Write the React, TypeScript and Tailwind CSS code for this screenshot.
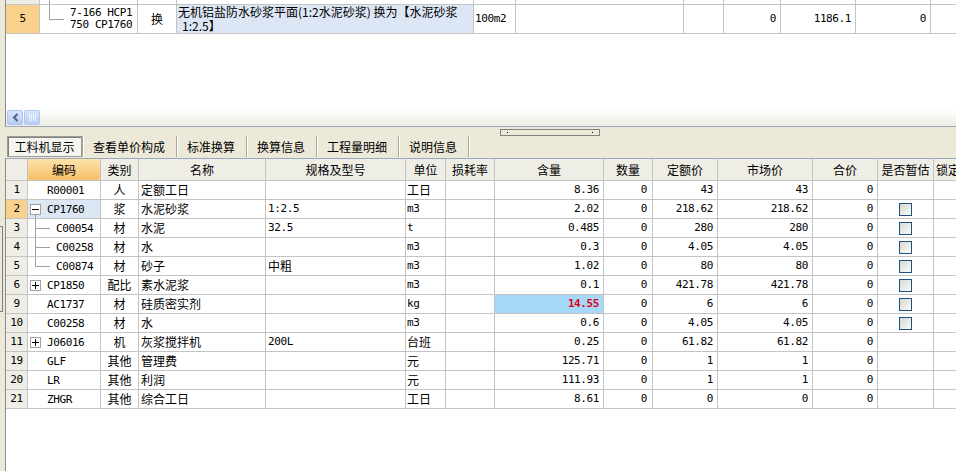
import React from 'react';

const cjk = "font-['Noto_Sans_CJK_SC',sans-serif] text-[12px]";
const mono = "font-['DejaVu_Sans_Mono','Noto_Sans_CJK_SC',monospace] text-[11px] tracking-[-0.4px]";
const isCjk = (s: string) => /[\u4e00-\u9fff]/.test(s);
const fontFor = (s: string) => (isCjk(s) ? cjk : mono);

type Row = {
  n: string;
  code: string;
  tree?: 'minus' | 'plus';
  child?: 'mid' | 'last';
  cat: string;
  name: string;
  spec?: string;
  unit: string;
  qty: string;
  price: string;
  cb?: boolean;
  sel?: boolean;
  hl?: boolean;
};

const rows: Row[] = [
  { n: '1', code: 'R00001', cat: '人', name: '定额工日', unit: '工日', qty: '8.36', price: '43' },
  { n: '2', code: 'CP1760', tree: 'minus', cat: '浆', name: '水泥砂浆', spec: '1:2.5', unit: 'm3', qty: '2.02', price: '218.62', cb: true, sel: true },
  { n: '3', code: 'C00054', child: 'mid', cat: '材', name: '水泥', spec: '32.5', unit: 't', qty: '0.485', price: '280', cb: true },
  { n: '4', code: 'C00258', child: 'mid', cat: '材', name: '水', unit: 'm3', qty: '0.3', price: '4.05', cb: true },
  { n: '5', code: 'C00874', child: 'last', cat: '材', name: '砂子', spec: '中粗', unit: 'm3', qty: '1.02', price: '80', cb: true },
  { n: '6', code: 'CP1850', tree: 'plus', cat: '配比', name: '素水泥浆', unit: 'm3', qty: '0.1', price: '421.78', cb: true },
  { n: '9', code: 'AC1737', cat: '材', name: '硅质密实剂', unit: 'kg', qty: '14.55', price: '6', cb: true, hl: true },
  { n: '10', code: 'C00258', cat: '材', name: '水', unit: 'm3', qty: '0.6', price: '4.05', cb: true },
  { n: '11', code: 'J06016', tree: 'plus', cat: '机', name: '灰浆搅拌机', spec: '200L', unit: '台班', qty: '0.25', price: '61.82' },
  { n: '19', code: 'GLF', cat: '其他', name: '管理费', unit: '元', qty: '125.71', price: '1' },
  { n: '20', code: 'LR', cat: '其他', name: '利润', unit: '元', qty: '111.93', price: '1' },
  { n: '21', code: 'ZHGR', cat: '其他', name: '综合工日', unit: '工日', qty: '8.61', price: '0' },
];

const headers: [string, string][] = [
  ['', 'w-[22px] justify-center'],
  ['编码', 'w-[73px] justify-center'],
  ['类别', 'w-[38px] justify-center'],
  ['名称', 'w-[127px] justify-center'],
  ['规格及型号', 'w-[140px] justify-center'],
  ['单位', 'w-[40px] justify-center'],
  ['损耗率', 'w-[49px] justify-center'],
  ['含量', 'w-[109px] justify-center'],
  ['数量', 'w-[49px] justify-center'],
  ['定额价', 'w-[65px] justify-center'],
  ['市场价', 'w-[95px] justify-center'],
  ['合价', 'w-[65px] justify-center'],
  ['是否暂估', 'w-[56px] justify-center'],
  ['锁定', 'w-[60px] pl-[2px]'],
];

const cell = 'h-full shrink-0 border-r border-[#c4c4c4] flex items-center overflow-hidden whitespace-nowrap';

function Checkbox() {
  return <div className="w-[13px] h-[13px] border border-[#1c5180] bg-gradient-to-br from-[#d8d8d0] to-[#fbfbf9]" />;
}

function TreeBox({ sign }: { sign: string }) {
  return (
    <div className="absolute left-[2px] top-[4px] w-[11px] h-[11px] border border-[#a0a0a0] bg-white flex items-center justify-center">
      <div className="relative w-[7px] h-[7px]">
        <div className="absolute left-0 top-[3px] w-[7px] h-px bg-black" />
        {sign === '+' && <div className="absolute left-[3px] top-0 w-px h-[7px] bg-black" />}
      </div>
    </div>
  );
}

function CodeCell({ r }: { r: Row }) {
  return (
    <div className={`${cell} w-[73px] relative ${r.sel ? 'bg-[#dde7f4]' : ''}`}>
      {r.tree === 'minus' && (
        <>
          <TreeBox sign="-" />
          <div className="absolute left-[7px] top-[15px] bottom-0 w-px bg-[#a0a0a0]" />
        </>
      )}
      {r.tree === 'plus' && <TreeBox sign="+" />}
      {r.child && (
        <>
          <div className={`absolute left-[7px] top-0 w-px bg-[#a0a0a0] ${r.child === 'mid' ? 'bottom-0' : 'h-[9px]'}`} />
          <div className="absolute left-[7px] top-[9px] w-[15px] h-px bg-[#a0a0a0]" />
        </>
      )}
      <span className={`${mono} ${r.child ? 'pl-[28px]' : 'pl-[19px]'} pt-[2px]`}>{r.code}</span>
    </div>
  );
}

function GridRow({ r }: { r: Row }) {
  return (
    <div className="flex h-[19px] border-b border-[#c4c4c4] bg-white">
      <div className={`${cell} w-[22px] justify-center ${mono} ${r.sel ? 'bg-[#f9d18d]' : 'bg-[#eeede6]'}`}>{r.n}</div>
      <CodeCell r={r} />
      <div className={`${cell} w-[38px] justify-center ${cjk}`}>{r.cat}</div>
      <div className={`${cell} w-[127px] pl-[2px] ${cjk}`}>{r.name}</div>
      <div className={`${cell} w-[140px] pl-[2px] ${fontFor(r.spec ?? '')}`}>{r.spec}</div>
      <div className={`${cell} w-[40px] pl-[1px] ${fontFor(r.unit)}`}>{r.unit}</div>
      <div className={`${cell} w-[49px]`} />
      <div
        className={`${cell} w-[109px] justify-end pr-[4px] ${mono} ${
          r.hl ? 'bg-[#a6d8f8] text-[#e00010] font-bold' : ''
        }`}
      >
        {r.qty}
      </div>
      <div className={`${cell} w-[49px] justify-end pr-[5px] ${mono}`}>0</div>
      <div className={`${cell} w-[65px] justify-end pr-[4px] ${mono}`}>{r.price}</div>
      <div className={`${cell} w-[95px] justify-end pr-[4px] ${mono}`}>{r.price}</div>
      <div className={`${cell} w-[65px] justify-end pr-[4px] ${mono}`}>0</div>
      <div className={`${cell} w-[56px] justify-center`}>{r.cb && <Checkbox />}</div>
      <div className={`${cell} w-[60px]`} />
    </div>
  );
}

function TopPanel() {
  const tc = 'h-full shrink-0 border-r border-[#c4c4c4]';
  return (
    <div className="ml-[5px] h-[127px] bg-white border-l border-b border-l-[#8a8a8a] border-b-[#99a8bd] flex flex-col overflow-hidden">
      {/* tail of the previous row */}
      <div className="flex h-[5px] shrink-0 border-b border-[#c4c4c4]">
        <div className={`${tc} w-[34px] bg-[#eeede6]`} />
        <div className={`${tc} w-[98px] relative`}>
          <div className="absolute left-[9px] top-0 bottom-0 w-px bg-[#a0a0a0]" />
        </div>
        <div className={`${tc} w-[39px]`} />
        <div className={`${tc} w-[297px]`} />
        <div className={`${tc} w-[42px]`} />
        <div className={`${tc} w-[168px]`} />
        <div className={`${tc} w-[40px]`} />
        <div className={`${tc} w-[57px]`} />
        <div className={`${tc} w-[75px]`} />
        <div className={`${tc} w-[75px]`} />
        <div className={`${tc} w-[60px]`} />
      </div>
      {/* row 5 */}
      <div className="flex h-[29px] shrink-0 border-b border-[#c4c4c4]">
        <div className={`${tc} w-[34px] bg-[#f9d18d] flex items-center justify-center ${mono}`}>5</div>
        <div className={`${tc} w-[98px] relative`}>
          <div className="absolute left-[9px] top-0 h-[14px] w-px bg-[#a0a0a0]" />
          <div className="absolute left-[9px] top-[14px] w-[15px] h-px bg-[#a0a0a0]" />
          <div className={`pl-[30px] pt-[2px] leading-[12px] ${mono}`}>
            <div>7-166 HCP1</div>
            <div>750 CP1760</div>
          </div>
        </div>
        <div className={`${tc} w-[39px] flex items-center justify-center ${cjk}`}>换</div>
        <div className={`${tc} w-[297px] bg-[#dde6f4] pl-[1px] whitespace-nowrap ${cjk} leading-[14px]`}>
          <div>无机铝盐防水砂浆平面(1:2水泥砂浆) 换为【水泥砂浆</div>
          <div className="pl-[4px]">1:2.5】</div>
        </div>
        <div className={`${tc} w-[42px] flex items-center pl-[1px] ${mono}`}>100m2</div>
        <div className={`${tc} w-[168px]`} />
        <div className={`${tc} w-[40px]`} />
        <div className={`${tc} w-[57px] flex items-center justify-end pr-[4px] ${mono}`}>0</div>
        <div className={`${tc} w-[75px] flex items-center justify-end pr-[4px] ${mono}`}>1186.1</div>
        <div className={`${tc} w-[75px] flex items-center justify-end pr-[4px] ${mono}`}>0</div>
        <div className={`${tc} w-[60px]`} />
      </div>
      <div className="flex-1" />
      {/* horizontal scrollbar */}
      <div className="h-[18px] shrink-0 bg-gradient-to-b from-[#ffffff] to-[#eeede5] flex items-center gap-px pl-px">
        <div className="w-[16px] h-[15px] rounded-[2px] border border-[#b0c4ee] bg-gradient-to-b from-[#d8e3fd] to-[#b9cbf5] flex items-center justify-center">
          <svg width="7" height="9" viewBox="0 0 7 9">
            <path d="M5.5 1 L2 4.5 L5.5 8" fill="none" stroke="#4d6185" strokeWidth="2" />
          </svg>
        </div>
        <div className="w-[16px] h-[15px] rounded-[2px] border border-[#b0c4ee] bg-gradient-to-b from-[#d8e3fd] to-[#b9cbf5] flex items-center justify-center gap-px">
          <div className="w-px h-[7px] bg-[#eef3ff]" />
          <div className="w-px h-[7px] bg-[#eef3ff]" />
          <div className="w-px h-[7px] bg-[#eef3ff]" />
          <div className="w-px h-[7px] bg-[#eef3ff]" />
        </div>
      </div>
    </div>
  );
}

function TabBar() {
  const tabs = ['查看单价构成', '标准换算', '换算信息', '工程量明细', '说明信息'];
  return (
    <div className="h-[31px] relative pt-[9px] pl-[7px] flex items-start">
      {/* splitter grip */}
      <div className="absolute left-[500px] top-[2px] w-[100px] h-[7px] border border-[#808080] flex items-center justify-between px-[6px]">
        <div className="w-px h-px bg-black" />
        <div className="w-px h-px bg-black" />
      </div>
      <div className={`w-[75px] h-[21px] flex items-center justify-center border border-[#9c9c94] shadow-[inset_1px_1px_0_#808080] bg-[#f5f4ee] ${cjk}`}>
        工料机显示
      </div>
      <div className="w-[2px] h-[21px] border-l border-[#aca899] bg-white" />
      {tabs.map((t) => (
        <React.Fragment key={t}>
          <div className={`h-[21px] flex items-center pl-[9px] pr-[11px] ${cjk}`}>{t}</div>
          <div className="w-[2px] h-[21px] border-l border-[#aca899] bg-white" />
        </React.Fragment>
      ))}
    </div>
  );
}

export default function App() {
  return (
    <div className="w-[956px] h-[471px] overflow-hidden bg-[#ece9d8] relative text-black">
      <TopPanel />
      <TabBar />
      <div className="ml-[5px] h-[313px] bg-white border-t border-l border-t-[#99a8bd] border-l-[#8a8a8a] overflow-hidden">
        <div className="flex h-[22px] border-b border-[#c4c4c4] bg-[#eeede6]">
          {headers.map(([label, w], i) => (
            <div
              key={i}
              className={`${cell} ${w} ${cjk} ${i === 1 ? 'bg-gradient-to-b from-[#fde2a8] to-[#f5c068]' : ''}`}
            >
              {label}
            </div>
          ))}
        </div>
        {rows.map((r) => (
          <GridRow key={r.n} r={r} />
        ))}
      </div>
      {/* edge of the collapsed side pane */}
      <div className="absolute left-0 top-[226px] w-[3px] h-[86px] border-t border-r border-b border-[#808080]" />
    </div>
  );
}
